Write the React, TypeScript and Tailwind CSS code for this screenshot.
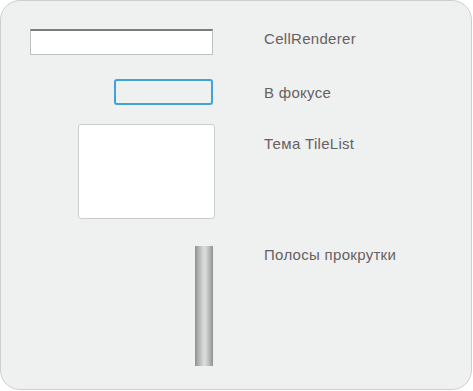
import React from "react";

const labelClass =
	"text-[15px] leading-[17px] text-[#676161] tracking-[0.3px] whitespace-nowrap";

const Row = ({
	preview,
	label,
	labelOffset,
	className,
}: {
	preview: React.ReactNode;
	label: string;
	labelOffset: string;
	className: string;
}) => (
	<div className={`flex items-start ${className}`}>
		<div className="w-[212px] flex justify-end">{preview}</div>
		<p className={`ml-[51px] ${labelOffset} ${labelClass}`}>{label}</p>
	</div>
);

export default function App() {
	return (
		<div
			className="w-[473px] h-[391px] bg-white"
			style={{ fontFamily: '"Liberation Sans", Arial, sans-serif' }}
		>
			<div className="w-[472px] h-[390px] bg-[#eff0f0] border border-[#cdcfcf] rounded-[20px] pt-[28px]">
				<Row
					className=""
					labelOffset="mt-[1px]"
					label="CellRenderer"
					preview={
						<div className="w-[183px] h-[26px] bg-white border border-[#bcc0c0] border-t-[#7c7c7c] border-t-2" />
					}
				/>
				<Row
					className="mt-[24px]"
					labelOffset="mt-[5px]"
					label="В фокусе"
					preview={
						<div className="w-[99px] h-[26px] border-2 border-[#3ea3dd] rounded-[3px]" />
					}
				/>
				<Row
					className="mt-[19px]"
					labelOffset="mt-[11px]"
					label="Тема TileList"
					preview={
						<div className="w-[137px] h-[95px] -mr-[2px] bg-white border border-[#cbcccc] rounded-[3px]" />
					}
				/>
				<Row
					className="mt-[27px]"
					labelOffset="mt-[0px]"
					label="Полосы прокрутки"
					preview={
						<div className="w-[18px] h-[120px] bg-[linear-gradient(to_right,#8b8d8e_0%,#a9abac_15%,#d4d6d6_45%,#dcdede_55%,#b5b7b8_80%,#8e9091_100%)]" />
					}
				/>
			</div>
		</div>
	);
}
